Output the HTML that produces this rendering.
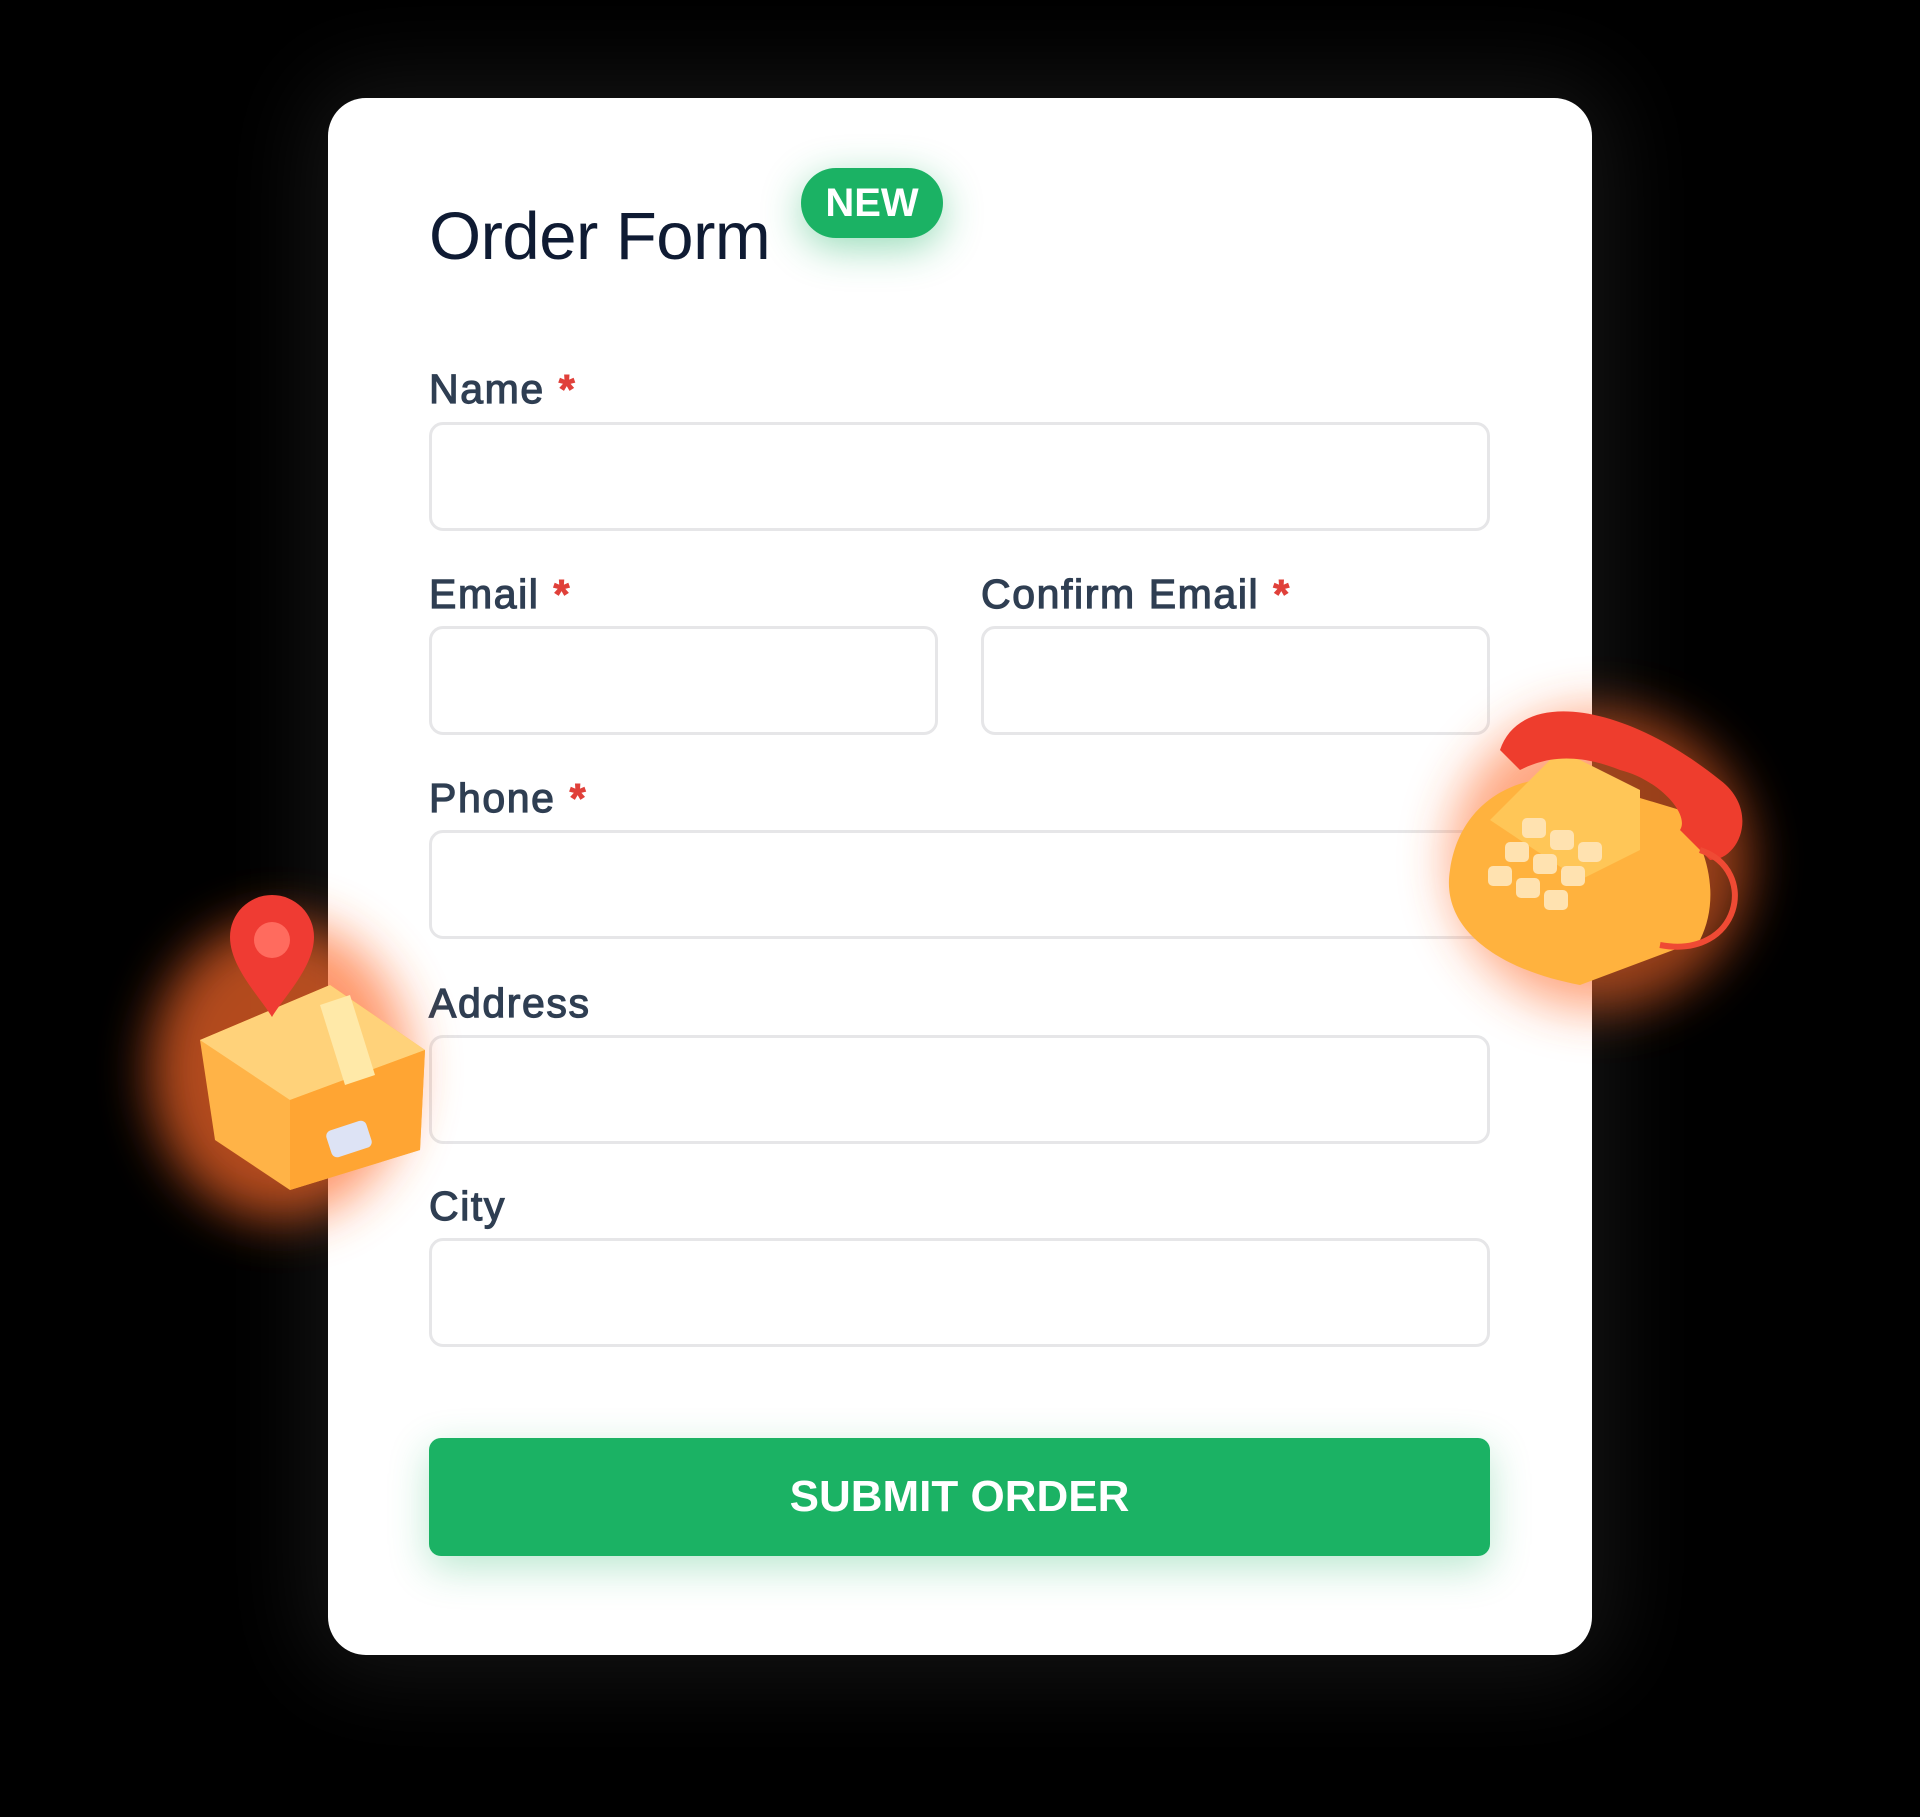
<!DOCTYPE html>
<html><head><meta charset="utf-8"><style>
html,body{margin:0;padding:0;background:#000;}
body{width:1920px;height:1817px;position:relative;overflow:hidden;font-family:"Liberation Sans",sans-serif;}
.card{position:absolute;left:328px;top:98px;width:1264px;height:1557px;background:#fff;border-radius:38px;box-shadow:0 0 90px 20px rgba(60,60,60,.35);}
.t{position:absolute;left:429px;top:198px;font-size:67px;color:#0f1b33;letter-spacing:-0.5px;}
.badge{position:absolute;left:801px;top:168px;width:142px;height:70px;border-radius:35px;background:#1bb264;color:#fff;font-weight:bold;font-size:40px;line-height:70px;text-align:center;box-shadow:0 10px 40px rgba(27,178,100,.45);}
.l{position:absolute;font-size:41px;color:#2f3e52;font-weight:normal;-webkit-text-stroke:1.2px #2f3e52;letter-spacing:1.6px;}
.l b{color:#e0403a;-webkit-text-stroke:1px #e0403a;margin-left:14px;}
.i{position:absolute;border:3px solid #e6e6e8;border-radius:14px;box-sizing:border-box;background:#fff;}
.btn{position:absolute;left:429px;top:1438px;width:1061px;height:118px;background:#1bb264;border-radius:12px;color:#fff;font-weight:bold;font-size:44px;line-height:118px;text-align:center;box-shadow:0 12px 40px rgba(27,178,100,.3);}
</style></head><body>
<div class="card"></div>
<div class="t">Order Form</div>
<div class="badge">NEW</div>
<div class="l" style="left:429px;top:366px">Name<b>*</b></div>
<div class="i" style="left:429px;top:422px;width:1061px;height:109px"></div>
<div class="l" style="left:429px;top:571px">Email<b>*</b></div>
<div class="i" style="left:429px;top:626px;width:509px;height:109px"></div>
<div class="l" style="left:981px;top:571px">Confirm Email<b>*</b></div>
<div class="i" style="left:981px;top:626px;width:509px;height:109px"></div>
<div class="l" style="left:429px;top:775px">Phone<b>*</b></div>
<div class="i" style="left:429px;top:830px;width:1061px;height:109px"></div>
<div class="l" style="left:429px;top:980px">Address</div>
<div class="i" style="left:429px;top:1035px;width:1061px;height:109px"></div>
<div class="l" style="left:429px;top:1183px">City</div>
<div class="i" style="left:429px;top:1238px;width:1061px;height:109px"></div>
<div class="btn">SUBMIT ORDER</div>
<svg style="position:absolute;left:0;top:0" width="1920" height="1817">
<defs><filter id="b" x="-50%" y="-50%" width="200%" height="200%"><feGaussianBlur stdDeviation="25"/></filter></defs>
<ellipse cx="280" cy="1070" rx="130" ry="150" fill="#ff6a2a" opacity=".7" filter="url(#b)"/>
<path d="M200 1040 L330 985 L425 1050 L420 1150 L290 1190 L215 1140 Z" fill="#ffb347"/>
<path d="M200 1040 L330 985 L425 1050 L290 1100 Z" fill="#ffd27a"/>
<path d="M290 1100 L425 1050 L420 1150 L290 1190 Z" fill="#ffa533"/>
<path d="M320 1005 L350 995 L375 1075 L345 1085 Z" fill="#ffe9a8"/>
<rect x="328" y="1125" width="42" height="28" rx="6" fill="#dde3f5" transform="rotate(-18 349 1139)"/>
<path d="M272 895 a42 42 0 0 1 42 42 c0 30 -30 60 -42 80 c-12 -20 -42 -50 -42 -80 a42 42 0 0 1 42 -42z" fill="#ef3b33"/>
<circle cx="272" cy="940" r="18" fill="#ff6b5e"/>
<ellipse cx="1600" cy="860" rx="150" ry="150" fill="#ff6a2a" opacity=".6" filter="url(#b)"/>
<path d="M1450 870 C1460 800 1520 770 1580 780 L1680 810 C1710 850 1720 900 1700 940 L1580 985 C1500 970 1440 930 1450 870 Z" fill="#ffb23e"/>
<path d="M1490 820 L1560 750 L1640 790 L1640 850 L1580 880 Z" fill="#ffc657"/>
<path d="M1500 750 C1520 690 1620 700 1720 780 C1760 810 1740 860 1710 860 L1680 830 C1690 815 1660 780 1620 770 C1570 750 1540 760 1520 770 Z" fill="#ee3d2d"/>
<g fill="#ffe2b0">
<rect x="1522" y="818" width="24" height="20" rx="5"/><rect x="1550" y="830" width="24" height="20" rx="5"/><rect x="1578" y="842" width="24" height="20" rx="5"/>
<rect x="1505" y="842" width="24" height="20" rx="5"/><rect x="1533" y="854" width="24" height="20" rx="5"/><rect x="1561" y="866" width="24" height="20" rx="5"/>
<rect x="1488" y="866" width="24" height="20" rx="5"/><rect x="1516" y="878" width="24" height="20" rx="5"/><rect x="1544" y="890" width="24" height="20" rx="5"/>
</g>
<path d="M1700 850 C1760 870 1740 960 1660 945" stroke="#ef4a34" stroke-width="6" fill="none"/>
</svg>
</body></html>
